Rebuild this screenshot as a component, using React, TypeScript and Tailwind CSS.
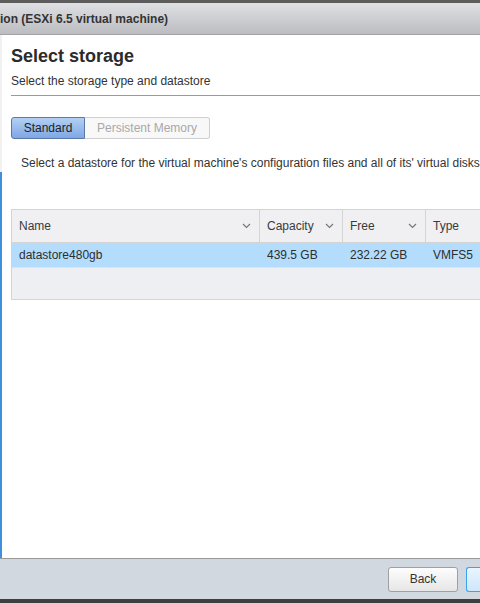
export default function App() {
  const cols = [
    { name: "Name", w: "w-[248px]", chevron: true },
    { name: "Capacity", w: "w-[83px]", chevron: true },
    { name: "Free", w: "w-[83px]", chevron: true },
    { name: "Type", w: "flex-1", chevron: false },
  ];
  const row = ["datastore480gb", "439.5 GB", "232.22 GB", "VMFS5"];

  return (
    <div
      className="w-[480px] h-[603px] flex flex-col overflow-hidden bg-white text-[#333]"
      style={{ fontFamily: '"Liberation Sans", Arial, sans-serif' }}
    >
      {/* window top edge */}
      <div className="h-[3px] bg-[#5c5c5c] shrink-0" />

      {/* title bar */}
      <div className="h-[32px] shrink-0 flex items-center bg-gradient-to-b from-[#dfe0e3] to-[#bcbdc0] border-b border-[#a2a2a5] overflow-hidden whitespace-nowrap">
        <span className="text-[12px] font-bold text-[#333]">ion (ESXi 6.5 virtual machine)</span>
      </div>

      {/* content */}
      <div className="flex-1 flex min-h-0">
        <div className="w-[2px] shrink-0 flex flex-col">
          <div className="h-[137px] bg-[#f1f1f1]" />
          <div className="flex-1 bg-[#3f8fdc]" />
        </div>
        <div className="flex-1 pl-[9px] pt-[10px] flex flex-col overflow-hidden">
          <h1 className="text-[18px] font-bold leading-[22px] text-[#2b2b2b]">Select storage</h1>
          <p className="text-[12px] leading-[14px] mt-[7px]">Select the storage type and datastore</p>
          <div className="h-px bg-[#9a9a9a] mt-[7px]" />

          {/* tabs */}
          <div className="flex mt-[21px]">
            <div className="h-[22px] w-[74px] flex items-center justify-center text-[12px] text-[#222] rounded-l-[3px] border border-[#5a79a8] bg-gradient-to-b from-[#b3d0f3] to-[#7fa7e6]">
              Standard
            </div>
            <div className="h-[22px] w-[125px] flex items-center justify-center text-[12px] text-[#a8a8a8] rounded-r-[3px] border border-l-0 border-[#cfcfcf] bg-[#f8f8f8]">
              Persistent Memory
            </div>
          </div>

          <p className="text-[12px] leading-[14px] mt-[17px] pl-[10px] whitespace-nowrap">
            Select a datastore for the virtual machine's configuration files and all of its' virtual disks.
          </p>

          {/* datastore table */}
          <div className="mt-[39px] border-t border-l border-b border-[#d4d4d4] bg-[#eeeff2] w-[520px]">
            <div className="flex h-[33px] border-b border-[#d4d4d4] bg-[#f0f0f3]">
              {cols.map((c) => (
                <div
                  key={c.name}
                  className={`${c.w} shrink-0 flex items-center justify-between px-[7px] text-[12px] text-[#3a3a3a] border-r border-[#d4d4d4]`}
                >
                  <span>{c.name}</span>
                  {c.chevron && (
                    <svg width="9" height="6" viewBox="0 0 9 6" className="mr-[1px]">
                      <path d="M1 1l3.5 3.5L8 1" fill="none" stroke="#777" strokeWidth="1.2" />
                    </svg>
                  )}
                </div>
              ))}
            </div>
            <div className="flex h-[25px] bg-[#b4ddfd] border-b border-[#d8e4ee]">
              {cols.map((c, i) => (
                <div
                  key={c.name}
                  className={`${c.w} shrink-0 flex items-center px-[7px] text-[12px] text-[#2e2e2e]`}
                >
                  {row[i]}
                </div>
              ))}
            </div>
            <div className="h-[31px]" />
          </div>
        </div>
      </div>

      {/* footer */}
      <div className="h-[41px] shrink-0 bg-[#d1d8df] border-t border-[#9a9a9a] flex items-center justify-end gap-[8px]">
        <button className="w-[70px] h-[25px] rounded-[3px] border border-[#a0a0a0] bg-gradient-to-b from-[#fdfdfd] to-[#e6e6e6] text-[12px] text-[#333]">
          Back
        </button>
        <button className="w-[14px] h-[25px] rounded-l-[3px] border border-r-0 border-[#38a4ee] bg-gradient-to-b from-[#eaf5ff] to-[#cfe6fb]" />
      </div>
      <div className="h-[4px] bg-[#3f3f3f] shrink-0" />
    </div>
  );
}
